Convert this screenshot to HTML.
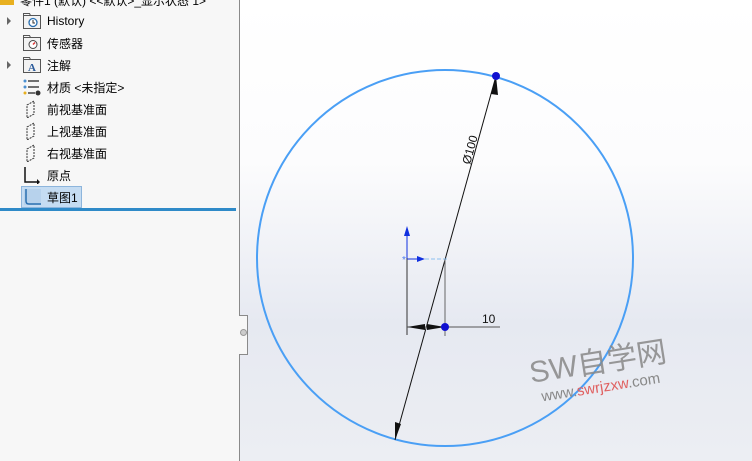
<!DOCTYPE html>
<html><head><meta charset="utf-8"><style>
body{margin:0;width:752px;height:461px;overflow:hidden;position:relative;font-family:"Liberation Sans","Noto Sans CJK SC",sans-serif;}
#bg{position:absolute;left:0;top:0;width:752px;height:461px;background:linear-gradient(180deg,#fff 0%,#fcfcfd 35%,#e6e9f1 70%,#eceef3 100%);}
#panel{position:absolute;left:0;top:0;width:239px;height:461px;background:#f7f7f7;border-right:1px solid #8a8a8a;}
.row{position:absolute;left:22px;height:22px;display:flex;align-items:center;font-size:12px;color:#000;}
.ic{width:20px;height:18px;margin-right:5px;position:relative;}
.tri{position:absolute;left:7px;width:0;height:0;border-left:4px solid #666;border-top:4px solid transparent;border-bottom:4px solid transparent;}
</style></head><body>
<div id="bg"></div>
<div id="panel">
<div style="position:absolute;left:0;top:-8px;font-size:12px;color:#000;white-space:nowrap"><span style="display:inline-block;width:14px;height:12px;background:#e8b020;margin-right:6px"></span>零件1 (默认) <<默认>_显示状态 1></div>
<div class="tri" style="top:17px"></div>
<div class="row" style="top:10px"><svg class="ic" viewBox="0 0 20 18"><rect x="1.5" y="3.5" width="17" height="13" fill="#f2f2f2" stroke="#555"/><path d="M1.5 3.5v-2h6l1 2" fill="none" stroke="#555"/><circle cx="11" cy="10.5" r="4" fill="#fff" stroke="#2a6fb0" stroke-width="1.3"/><path d="M11 8v3h2" stroke="#333" fill="none"/></svg>History</div>
<div class="row" style="top:32px"><svg class="ic" viewBox="0 0 20 18"><rect x="1.5" y="3.5" width="17" height="13" fill="#f2f2f2" stroke="#555"/><path d="M1.5 3.5v-2h6l1 2" fill="none" stroke="#555"/><circle cx="11" cy="10.5" r="4" fill="#fff" stroke="#444"/><path d="M11 10.5l2-2" stroke="#d33" stroke-width="1.5"/></svg>传感器</div>
<div class="tri" style="top:61px"></div>
<div class="row" style="top:54px"><svg class="ic" viewBox="0 0 20 18"><rect x="1.5" y="3.5" width="17" height="13" fill="#f2f2f2" stroke="#555"/><path d="M1.5 3.5v-2h6l1 2" fill="none" stroke="#555"/><text x="6" y="15" font-size="11" font-weight="bold" fill="#2a5a9a" font-family="Liberation Serif">A</text></svg>注解</div>
<div class="row" style="top:76px"><svg class="ic" viewBox="0 0 20 18"><circle cx="3" cy="3" r="1.5" fill="#4a8fd0"/><circle cx="3" cy="9" r="1.5" fill="#4a8fd0"/><circle cx="3" cy="15" r="1.5" fill="#e8b020"/><path d="M6 3h11M6 9h11M6 15h7" stroke="#444" stroke-width="1.5"/><circle cx="16" cy="15" r="2.5" fill="#333"/></svg>材质 &lt;未指定&gt;</div>
<div class="row" style="top:98px"><svg class="ic" viewBox="0 0 20 18"><path d="M5 5l7-4v13l-7 4z" fill="none" stroke="#333" stroke-dasharray="2 1"/></svg>前视基准面</div>
<div class="row" style="top:120px"><svg class="ic" viewBox="0 0 20 18"><path d="M5 5l7-4v13l-7 4z" fill="none" stroke="#333" stroke-dasharray="2 1"/></svg>上视基准面</div>
<div class="row" style="top:142px"><svg class="ic" viewBox="0 0 20 18"><path d="M5 5l7-4v13l-7 4z" fill="none" stroke="#333" stroke-dasharray="2 1"/></svg>右视基准面</div>
<div class="row" style="top:164px"><svg class="ic" viewBox="0 0 20 18"><path d="M3 1v15h14" fill="none" stroke="#111" stroke-width="1.5"/><path d="M15 13l3 3-3 3z" fill="#111"/></svg>原点</div>
<div class="row" style="top:186px;left:21px;background:#c5dcf2;border:1px solid #8db5dc;height:20px;padding-right:3px"><svg class="ic" viewBox="0 0 20 18"><rect x="2" y="1" width="17" height="16" fill="#b7d2ec"/><path d="M4 1v12q0 3 3 3h12" fill="none" stroke="#2a6fb0" stroke-width="1.5"/></svg>草图1</div>
<div style="position:absolute;left:0;top:208px;width:236px;height:3px;background:#2f8ac8"></div>
</div>
<div style="position:absolute;left:239px;top:315px;width:8px;height:38px;background:#f7f7f7;border:1px solid #8a8a8a;border-left:none"></div>
<div style="position:absolute;left:240px;top:329px;width:5px;height:5px;border-radius:50%;background:#ccc;border:1px solid #999"></div>
<svg style="position:absolute;left:0;top:0" width="752" height="461">
<circle cx="445" cy="258" r="188" fill="none" stroke="#4a9ff5" stroke-width="2"/>
<line x1="395" y1="440" x2="496" y2="76" stroke="#111" stroke-width="1"/>
<path d="M496 76l-5 18 7 1z" fill="#111"/><path d="M395 440l0-18 6 2z" fill="#111"/>
<text x="0" y="0" transform="translate(470,165) rotate(-74.5)" font-size="12" fill="#111" font-family="Liberation Sans">Ø100</text>
<circle cx="496" cy="76" r="4" fill="#1010d0"/>
<line x1="407" y1="236" x2="407" y2="335" stroke="#333"/>
<path d="M407 226l-3 10h6z" fill="#1030e0"/><line x1="407" y1="236" x2="407" y2="258" stroke="#1030e0"/>
<line x1="407" y1="259" x2="420" y2="259" stroke="#1030e0"/><path d="M425 259l-8-3v6z" fill="#1030e0"/>
<line x1="425" y1="259" x2="447" y2="259" stroke="#8cc0f0" stroke-dasharray="4 2"/>
<text x="402" y="263" font-size="10" fill="#4a7af0">*</text>
<line x1="445" y1="260" x2="445" y2="336" stroke="#666"/>
<line x1="407" y1="327" x2="500" y2="327" stroke="#555"/>
<path d="M407 327l18-3v6zM445 327l-18-3v6z" fill="#111"/>
<circle cx="445" cy="327" r="4" fill="#1010d0"/>
<text x="482" y="323" font-size="12" fill="#111">10</text>
<g transform="rotate(-9 600 370)" font-family="Liberation Sans,Noto Sans CJK SC,sans-serif">
<text x="530" y="372" font-size="30" fill="#888" opacity="0.85">SW自学网</text>
<text x="538" y="392" font-size="15" fill="#888"><tspan>www.</tspan><tspan fill="#e06060">swrjzxw</tspan><tspan>.com</tspan></text>
</g>
</svg>
</body></html>
